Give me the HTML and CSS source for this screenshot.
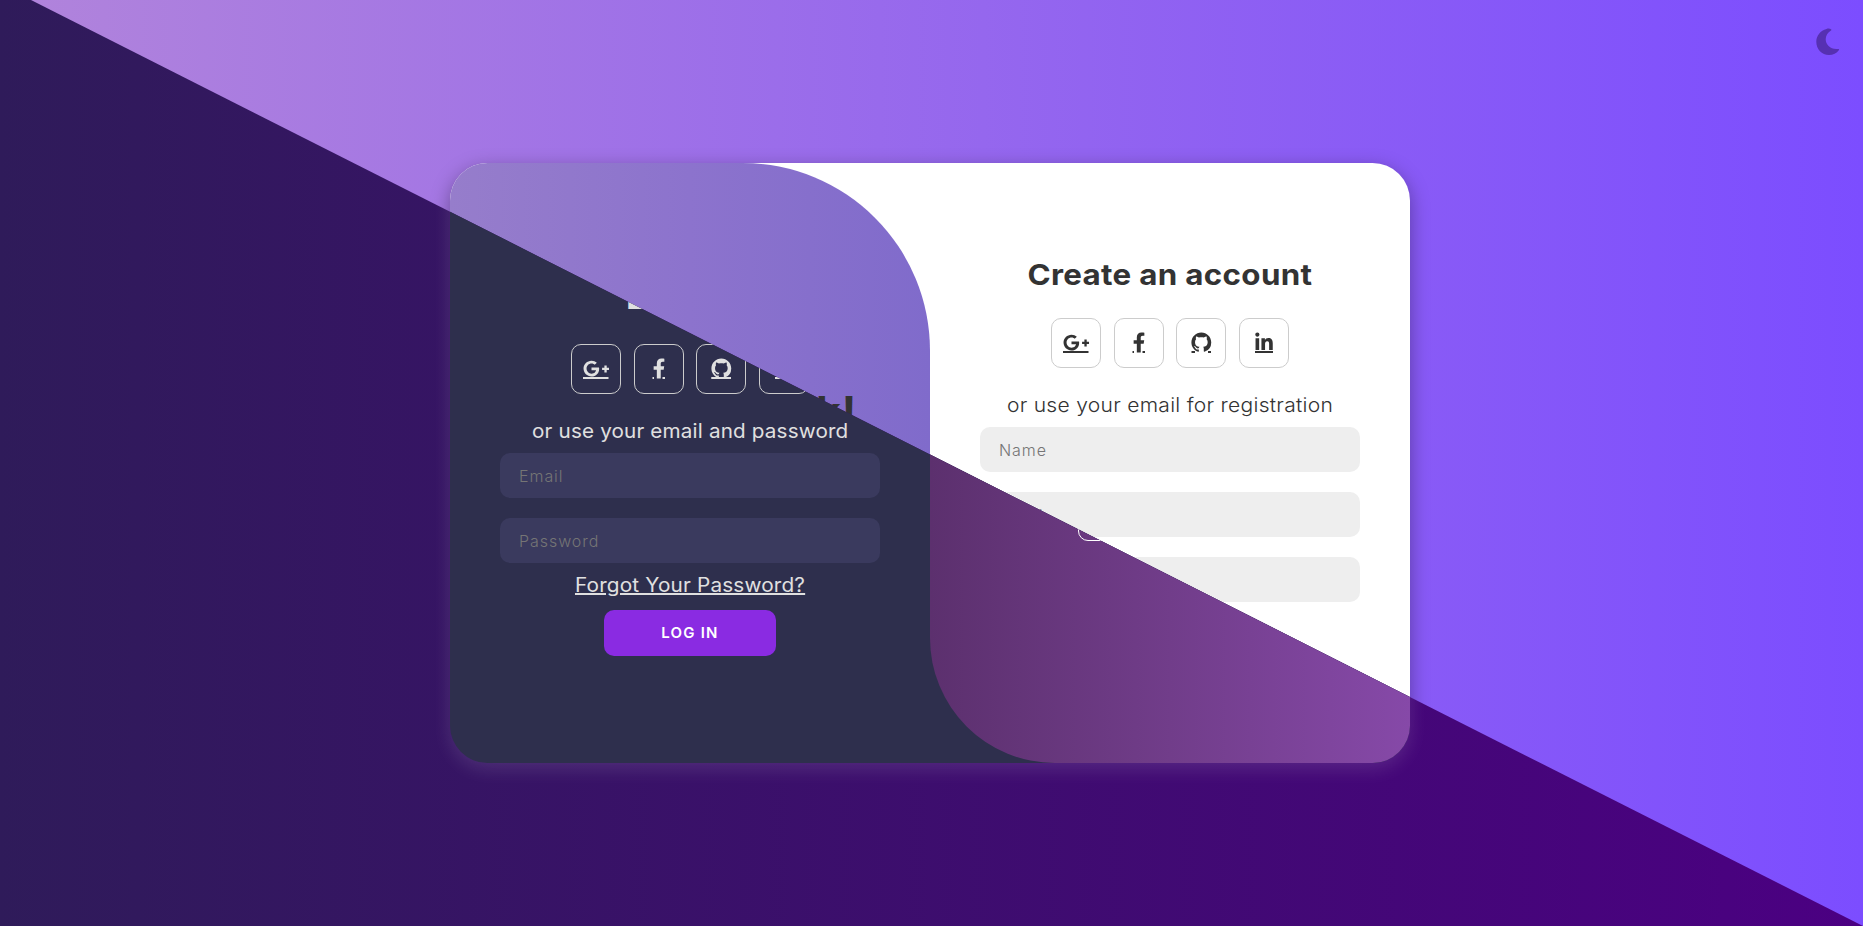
FILE: index.html
```html
<!DOCTYPE html>
<html lang="en">
<head>
<meta charset="utf-8">
<title>Login</title>
<link rel="stylesheet" href="styles.css">
</head>
<body>
<svg class="defs" aria-hidden="true">
  <symbol id="google" viewBox="0 0 50 50">
    <path transform="translate(12 14) scale(.0415 .0415)" d="M386.061 228.496c1.834 9.692 3.143 19.384 3.143 31.956C389.204 370.205 315.599 448 204.8 448c-106.084 0-192-85.915-192-192s85.916-192 192-192c51.864 0 95.083 18.859 128.611 50.292l-52.126 50.03c-14.145-13.621-39.028-29.599-76.485-29.599-65.484 0-118.92 54.221-118.92 121.277 0 67.056 53.436 121.277 118.92 121.277 75.961 0 104.513-54.745 108.965-82.773H204.8v-66.009h181.261zm185.406 6.437V179.2h-56.001v55.733h-55.733v56.001h55.733v55.733h56.001v-55.733H627.2v-56.001h-55.733z"/>
    <path d="M12 33h25.500v2H12z"/>
  </symbol>
  <symbol id="facebook" viewBox="0 0 50 50">
    <path transform="translate(18.75 14.5) scale(.0390625)" d="M279.14 288l14.22-92.66h-88.91v-60.13c0-25.35 12.42-50.06 52.24-50.06h40.42V6.26S260.43 0 225.36 0c-73.22 0-121.08 44.38-121.08 124.72v70.62H22.89V288h81.39v224h100.17V288z"/>
    <path d="M18.500 33h1.500v2h-1.500zM28.500 33h2.500v2h-2.500z"/>
  </symbol>
  <symbol id="github" viewBox="0 0 50 50">
    <path transform="translate(15.400 14.500) scale(1.24)" d="M8 0C3.58 0 0 3.58 0 8c0 3.54 2.29 6.53 5.47 7.59.4.07.55-.17.55-.38 0-.19-.01-.82-.01-1.49-2.01.37-2.53-.49-2.69-.94-.09-.23-.48-.94-.82-1.13-.28-.15-.68-.52-.01-.53.63-.01 1.08.58 1.23.82.72 1.21 1.87.87 2.33.66.07-.52.28-.87.51-1.07-1.78-.2-3.64-.89-3.64-3.95 0-.87.31-1.59.82-2.15-.08-.2-.36-1.02.08-2.12 0 0 .67-.21 2.2.82.64-.18 1.32-.27 2-.27.68 0 1.36.09 2 .27 1.53-1.04 2.2-.82 2.2-.82.44 1.1.16 1.92.08 2.12.51.56.82 1.27.82 2.15 0 3.07-1.87 3.75-3.65 3.95.29.25.54.73.54 1.48 0 1.07-.01 1.93-.01 2.2 0 .21.15.46.55.38A8.013 8.013 0 0016 8c0-4.42-3.58-8-8-8z"/>
    <path d="M15.500 33h3.500v2h-3.500zM32 33h3v2h-3z"/>
  </symbol>
  <symbol id="linkedin" viewBox="0 0 50 50">
    <path transform="translate(16.25 14.500) scale(.0390625)" d="M100.28 448H7.4V148.9h92.88zM53.79 108.1C24.09 108.1 0 83.5 0 53.8a53.79 53.79 0 0 1 107.58 0c0 29.7-24.1 54.3-53.79 54.3zM447.9 448h-92.68V302.4c0-34.7-.7-79.2-48.29-79.2-48.29 0-55.69 37.7-55.69 76.7V448h-92.78V148.9h89.08v40.8h1.3c12.4-23.5 42.69-48.3 87.88-48.3 94 0 111.28 61.9 111.28 142.3V448z"/>
    <path d="M16 33h18v2H16z"/>
  </symbol>
</svg>

<div class="scene light">
  <svg class="moon" viewBox="0 0 24 28"><path d="M15.300 1.400C13.800.300 12 .500 10.500.900 4.500 2.500.300 7.500.300 13.700.300 21 5.800 27 13 27c4 0 7.700-1.800 10-5 .300-.700-.200-1.200-1-1.100C14.800 21.800 9.700 17 9.700 11.300c0-3.900 2-7 5.300-8.900.500-.300.600-.700.300-1z"/></svg>
  <main class="card">
    <section class="panel">
      <h1 class="welcome">Welcome Back!</h1>
    </section>
    <form class="form">
      <h1 class="title">Create an account</h1>
      <div class="social">
        <a class="tile"><svg><use href="#google"/></svg></a>
        <a class="tile"><svg><use href="#facebook"/></svg></a>
        <a class="tile"><svg><use href="#github"/></svg></a>
        <a class="tile"><svg><use href="#linkedin"/></svg></a>
      </div>
      <span class="hint">or use your email for registration</span>
      <input class="field" type="text" placeholder="Name">
      <input class="field" type="email" placeholder="Email">
      <input class="field" type="password">
    </form>
  </main>
</div>

<div class="scene dark">
  <main class="card">
    <form class="form">
      <h1 class="title">Log In</h1>
      <div class="social">
        <a class="tile"><svg><use href="#google"/></svg></a>
        <a class="tile"><svg><use href="#facebook"/></svg></a>
        <a class="tile"><svg><use href="#github"/><path d="M15.500 33h19.500v2H15.500z"/></svg></a>
        <a class="tile"><svg><use href="#linkedin"/></svg></a>
      </div>
      <span class="hint">or use your email and password</span>
      <input class="field" type="email" placeholder="Email">
      <input class="field" type="password" placeholder="Password">
      <a class="forgot">Forgot Your Password?</a>
      <button class="submit" type="button">Log In</button>
    </form>
    <section class="panel">
      <button class="ghost" type="button"></button>
    </section>
  </main>
</div>
</body>
</html>
```
FILE: styles.css
```css
* { box-sizing: border-box; margin: 0; padding: 0; }

body {
  width: 1863px;
  height: 926px;
  overflow: hidden;
  display: grid;
  font-family: Inter, "Open Sans", sans-serif;
}

.defs { position: absolute; width: 0; height: 0; }

/* Both themes share one grid cell; the dark one is cut along the diagonal. */
.scene {
  grid-area: 1 / 1;
  display: grid;
  place-items: center;
  padding-right: 3px;
  position: relative;
}
.light { background: linear-gradient(to right, #b184db, #7c4dff); color: #333; }
.dark {
  background: linear-gradient(to right, #2f1b5a, #4b0082);
  color: #e0e0e0;
  clip-path: polygon(0 0, 31px 0, 1863px 926px, 0 926px);
}

.moon { position: absolute; left: 1816px; top: 28px; width: 24px; height: 28px; fill: #5630b2; }

.card {
  width: 960px;
  height: 600px;
  display: grid;
  grid-template-columns: 1fr 1fr;
  border-radius: 37.5px;
  overflow: hidden;
}
.light .card { background: #fff; box-shadow: 0 6px 19px rgba(0, 0, 0, .35); }
.dark .card { background: #2e2f4d; box-shadow: 0 6px 19px rgba(255, 255, 255, .12); }

.light .panel {
  background: linear-gradient(to right, #967dcb, #8c73cd 50%, #806bcb);
  border-radius: 0 187.5px 125px 0;
  padding-top: 225px;
}
.dark .panel {
  background: linear-gradient(to right, #5c306e, #713d8a 50%, #8649a8);
  border-radius: 187.5px 0 0 125px;
  padding: 330px 0 0 148px;
}
.welcome { font-size: 39px; line-height: 46px; text-align: center; letter-spacing: .7px; transform: scaleX(1.1); white-space: nowrap; }
.ghost { width: 184px; height: 48px; border: 1px solid #fff; border-radius: 10px; background: transparent; display: block; }

.form { display: flex; flex-direction: column; align-items: center; padding: 93px 50px 0; }
.dark .form { padding-top: 117px; }

.title { font-size: 29px; line-height: 37px; font-weight: 700; letter-spacing: .3px; transform: scaleX(1.08); margin-bottom: 25px; white-space: nowrap; }
.dark .title { font-size: 39px; letter-spacing: 2.2px; line-height: 30px; margin-bottom: 34px; transform: none; }

.social { display: flex; gap: 12.5px; margin-bottom: 25px; }
.tile { width: 50px; height: 50px; border: 1px solid #ccc; border-radius: 10px; }
.tile svg { display: block; width: 50px; height: 50px; margin: -1px; fill: currentColor; }

.hint { font-size: 19.5px; line-height: 24px; margin-bottom: 10px; white-space: nowrap; }
.light .hint { font-weight: 300; letter-spacing: .25px; transform: scaleX(1.08); }
.dark .hint { font-weight: 400; letter-spacing: .15px; transform: scaleX(1.06); }

.field {
  width: 380px;
  height: 45px;
  padding: 1px 19px 0;
  margin-bottom: 20px;
  border: 0;
  border-radius: 10px;
  background: #eee;
  font: 300 16px Inter, sans-serif;
  letter-spacing: .95px;
}
.light .field { padding-top: 0; }
.dark .field { background: #3a3a5e; }
.field::placeholder { color: #757575; opacity: 1; }

.forgot { margin-top: -10px; font-size: 19.5px; line-height: 24px; letter-spacing: .15px; transform: scaleX(1.065); text-decoration: underline; text-decoration-thickness: 2px; text-underline-offset: 1px; white-space: nowrap; }
.submit {
  margin-top: 13px;
  padding-bottom: 2px;
  width: 172px;
  height: 46px;
  border: 0;
  border-radius: 10px;
  background: #8a2be2;
  color: #fff;
  font: 600 15px Inter, sans-serif;
  letter-spacing: 1.2px;
  text-transform: uppercase;
}
```
